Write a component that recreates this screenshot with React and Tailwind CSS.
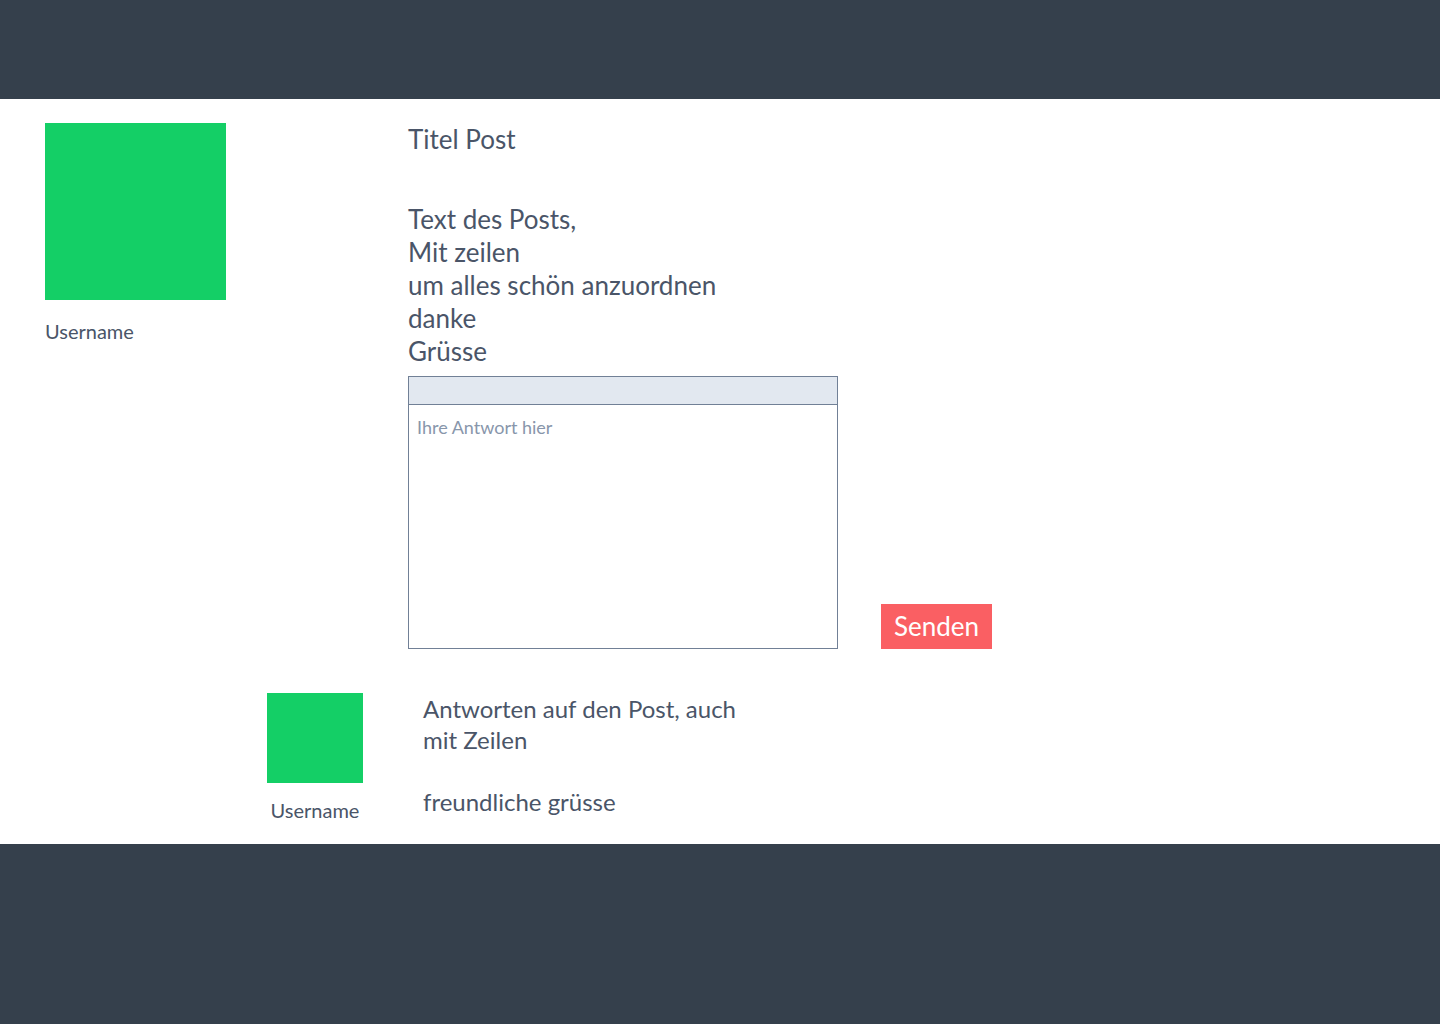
import React from 'react';

const Avatar = ({ size }) => <div className={`bg-[#14cf66] ${size}`} />;

export default function App() {
  return (
    <div className="min-h-screen flex flex-col bg-white font-['Lato','Liberation_Sans',sans-serif] text-[#4a5568]">
      <header className="h-[99px] bg-[#35404c]" />

      <main className="h-[745px] flex flex-col">
        {/* Post */}
        <div className="flex">
          <div className="w-[408px] pl-[45px] pt-[24px]">
            <Avatar size="w-[181px] h-[177px]" />
            <div className="mt-[18px] text-[20px] leading-[26px]">Username</div>
          </div>
          <div className="pt-[24px]">
            <h1 className="text-[26px] leading-[33px]">Titel Post</h1>
            <p className="mt-[47px] text-[26px] leading-[33px]">
              Text des Posts,<br />
              Mit zeilen<br />
              um alles schön anzuordnen<br />
              danke<br />
              Grüsse
            </p>
            <div className="mt-[8px] flex items-end">
              <div className="w-[430px] h-[273px] border border-[#718096] flex flex-col">
                <div className="h-[28px] bg-[#e2e8f0] border-b border-[#718096]" />
                <textarea
                  className="flex-1 resize-none px-[8px] py-[10px] text-[18px] leading-[24px] text-[#4a5568] placeholder:text-[#8896ab] outline-none"
                  placeholder="Ihre Antwort hier"
                />
              </div>
              <button className="ml-[43px] w-[111px] h-[45px] bg-[#fa5f63] text-white text-[26px] leading-[45px]">
                Senden
              </button>
            </div>
          </div>
        </div>

        {/* Reply */}
        <div className="mt-[44px] flex">
          <div className="ml-[267px] w-[96px] flex flex-col items-center">
            <Avatar size="w-[96px] h-[90px]" />
            <div className="mt-[14px] text-[20px] leading-[26px]">Username</div>
          </div>
          <div className="ml-[60px] text-[24px] leading-[31px]">
            Antworten auf den Post, auch<br />
            mit Zeilen<br />
            <br />
            freundliche grüsse
          </div>
        </div>
      </main>

      <footer className="flex-1 bg-[#35404c]" />
    </div>
  );
}
